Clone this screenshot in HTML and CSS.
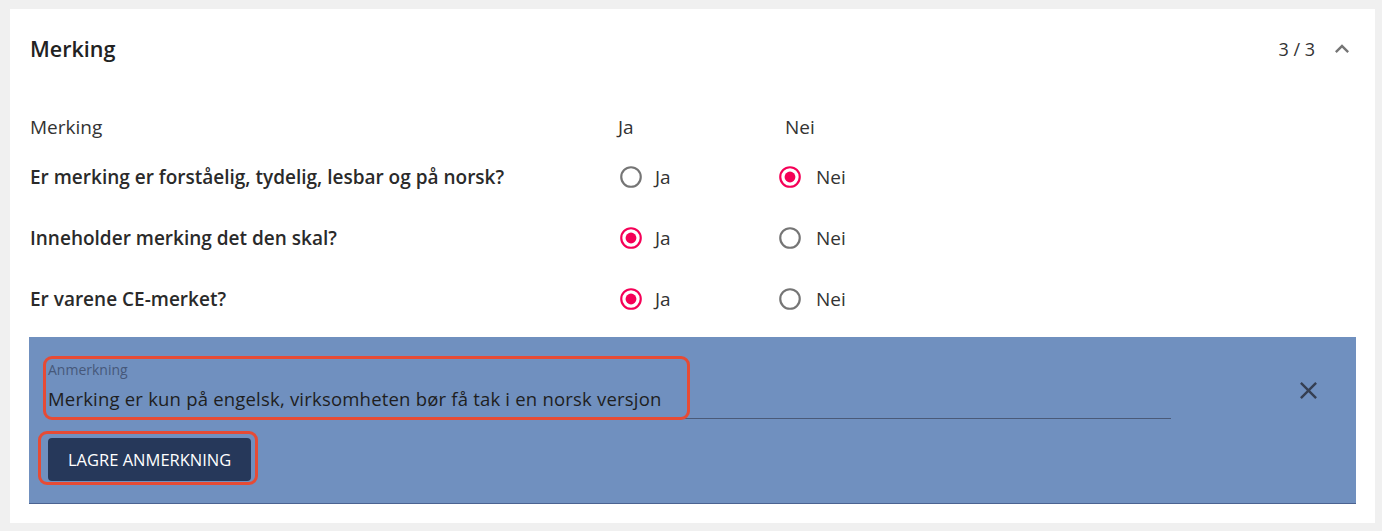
FILE: index.html
```html
<!DOCTYPE html>
<html lang="no">
<head>
    <meta charset="UTF-8">
    <meta name="viewport" content="width=device-width, initial-scale=1.0">
    <title>Merking</title>
    <link rel="stylesheet" href="styles.css">
</head>
<body>
    <div class="card">
        <!-- Seksjonshode -->
        <div class="card-header">
            <h2>Merking</h2>
            <div class="progress">
                <span>3 / 3</span>
                <svg class="chevron" viewBox="0 0 24 24"><path d="M12 8l-6 6 1.41 1.41L12 10.83l4.59 4.58L18 14z"/></svg>
            </div>
        </div>

        <!-- Spørsmål -->
        <div class="questions">
            <div class="q-head">Merking</div>
            <div class="q-head">Ja</div>
            <div class="q-head q-head-nei">Nei</div>

            <div class="q-text">Er merking er forståelig, tydelig, lesbar og på norsk?</div>
            <label class="radio"><svg viewBox="0 0 24 24"><circle class="ring" cx="12" cy="12" r="9"/></svg>Ja</label>
            <label class="radio checked"><svg viewBox="0 0 24 24"><circle class="ring" cx="12" cy="12" r="9"/><circle class="dot" cx="12" cy="12" r="5"/></svg>Nei</label>

            <div class="q-text">Inneholder merking det den skal?</div>
            <label class="radio checked"><svg viewBox="0 0 24 24"><circle class="ring" cx="12" cy="12" r="9"/><circle class="dot" cx="12" cy="12" r="5"/></svg>Ja</label>
            <label class="radio"><svg viewBox="0 0 24 24"><circle class="ring" cx="12" cy="12" r="9"/></svg>Nei</label>

            <div class="q-text">Er varene CE-merket?</div>
            <label class="radio checked"><svg viewBox="0 0 24 24"><circle class="ring" cx="12" cy="12" r="9"/><circle class="dot" cx="12" cy="12" r="5"/></svg>Ja</label>
            <label class="radio"><svg viewBox="0 0 24 24"><circle class="ring" cx="12" cy="12" r="9"/></svg>Nei</label>
        </div>

        <!-- Anmerkning -->
        <div class="remark">
            <div class="remark-row">
                <div class="field marked">
                    <div class="field-label">Anmerkning</div>
                    <div class="field-value">Merking er kun på engelsk, virksomheten bør få tak i en norsk versjon</div>
                </div>
                <button class="close-button" aria-label="Lukk">
                    <svg viewBox="0 0 24 24"><path d="M19 6.41L17.59 5 12 10.59 6.41 5 5 6.41 10.59 12 5 17.59 6.41 19 12 13.41 17.59 19 19 17.59 13.41 12z"/></svg>
                </button>
            </div>
            <button class="save-button marked">Lagre anmerkning</button>
        </div>
    </div>
</body>
</html>
```

FILE: styles.css
```css
* {
    box-sizing: border-box;
}

body {
    margin: 0;
    padding: 9px 7px 8px 10px;
    background: #f0f0f0;
    font-family: "Open Sans", "Noto Sans", sans-serif;
    color: #222;
}

.card {
    background: #fff;
    padding: 0 19px 19px;
}

.card-header {
    display: flex;
    align-items: center;
    justify-content: space-between;
    height: 79px;
    padding-left: 1px;
}

.card-header h2 {
    margin: 0;
    font-size: 21.5px;
    font-weight: 600;
}

.progress {
    display: flex;
    align-items: center;
    gap: 13px;
    font-size: 18px;
    color: #333;
}

.chevron {
    width: 28px;
    height: 28px;
    fill: #757575;
}

.questions {
    display: grid;
    grid-template-columns: 588px 159px 1fr;
    grid-auto-rows: 61px;
    grid-template-rows: 39px;
    align-items: center;
    padding: 19px 0 0 1px;
    font-size: 19px;
}

.q-head {
    color: #333;
}

.q-head-nei {
    padding-left: 8px;
}

.q-text {
    font-weight: 600;
    color: #2a2a2a;
}

.radio {
    display: flex;
    align-items: center;
    gap: 11px;
    color: #333;
}

.radio.checked + .radio,
.q-text + .radio + .radio {
    gap: 13px;
}

.radio svg {
    width: 26px;
    height: 26px;
}

.radio .ring {
    fill: none;
    stroke: #757575;
    stroke-width: 2;
}

.radio.checked .ring {
    stroke: #f50057;
}

.radio .dot {
    fill: #f50057;
}

.remark {
    margin-top: 8px;
    background: #7090bf;
    border-bottom: 1px solid #4b6391;
    padding: 25px 24px 22px 19px;
}

.remark-row {
    display: flex;
    align-items: center;
}

.field {
    flex: 1;
    border-bottom: 1px solid #4a5a78;
}

.field-label {
    font-size: 14px;
    line-height: 15px;
    color: #46587a;
}

.field-value {
    margin-top: 10px;
    padding-bottom: 7px;
    font-size: 18.5px;
    letter-spacing: 0.2px;
    line-height: 24px;
    color: #1e1e1e;
}

.close-button {
    width: 48px;
    height: 48px;
    margin-left: 113px;
    padding: 0;
    border: none;
    background: none;
    display: flex;
    align-items: center;
    justify-content: center;
}

.close-button svg {
    width: 29px;
    height: 29px;
    fill: #353f52;
}

.save-button {
    margin-top: 19px;
    height: 43px;
    padding: 0 20px;
    border: none;
    border-radius: 4px;
    background: #26385a;
    color: #fff;
    font-family: "Open Sans", "Noto Sans", sans-serif;
    font-size: 16.5px;
    font-weight: 500;
    text-transform: uppercase;
}

/* røde markeringer over feltet og knappen */
.marked {
    position: relative;
}

.field.marked::after,
.save-button.marked::after {
    content: "";
    position: absolute;
    border: 3px solid #e64b35;
    border-radius: 9px;
    pointer-events: none;
}

.field.marked::after {
    left: -5px;
    top: -6px;
    width: 641px;
    bottom: -2px;
}

.save-button.marked::after {
    left: -10px;
    top: -7px;
    right: -7px;
    bottom: -4px;
}
```
